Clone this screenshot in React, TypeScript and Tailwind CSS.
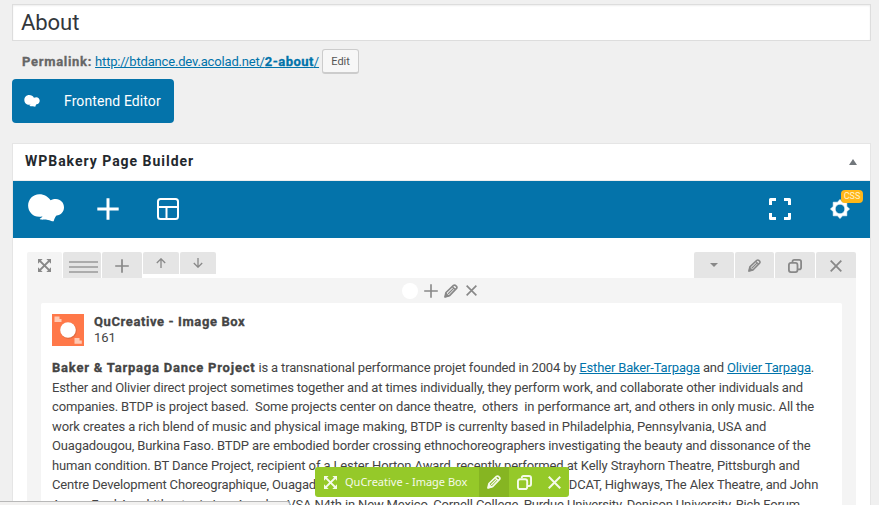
import React from "react";

function Logo({ className }: { className: string }) {
  return (
    <svg viewBox="0 0 36 28" className={className} fill="currentColor">
      <path d="M11.2 .2C5 .2 .1 5.2 .1 11.500S5 22.800 11.200 22.800C12.600 22.800 13.500 22.600 14.500 22.200C14 23.500 12.800 24.200 11.700 24.800C12.200 26.200 17.500 25.600 20 26C22 26.300 24 27.500 25.700 27.300C26.200 25.300 27 22.600 28.500 21.400C32.800 21.200 36 17.800 36 13.300C36 8.600 32.400 5 28 5C25.800 5 24.300 5.500 22.500 6.300C20.500 2.800 16.500 .2 11.200 .2Z" />
    </svg>
  );
}

function Plus({ className, w = 2 }: { className: string; w?: number }) {
  return (
    <svg viewBox="0 0 14 14" className={className} fill="none" stroke="currentColor" strokeWidth={w}>
      <path d="M7 .2V13.800M.2 7H13.800" />
    </svg>
  );
}

function Cross({ className }: { className: string }) {
  return (
    <svg viewBox="0 0 12 12" className={className} fill="none" stroke="currentColor" strokeWidth="1.8">
      <path d="M.7 .7L11.3 11.3M11.3 .7L.7 11.3" />
    </svg>
  );
}

function Pencil({ className }: { className: string }) {
  return (
    <svg viewBox="0 0 14 14" className={className} fill="none" stroke="currentColor" strokeWidth="1.7" strokeLinejoin="round">
      <path d="M2 8.5L9.5 1.4Q10.7.5 12 1.8Q13.5 3.2 12.5 4.4L5.3 11.8L1 13Z" />
      <path d="M8.4 2.7L11.4 5.5M4 10L9.6 4.4" strokeWidth="1.3" />
      <path d="M1 13L2 9L5 12Z" fill="currentColor" strokeWidth=".8" />
    </svg>
  );
}

function Copy({ className }: { className: string }) {
  return (
    <svg viewBox="0 0 14 14" className={className} fill="none" stroke="currentColor" strokeWidth="1.8">
      <rect x=".9" y="3.9" width="8.6" height="9.2" rx="2" />
      <path d="M4.5 3V2.6Q4.5.9 6.2.9H11.2Q13.1.9 13.1 2.8V8.4Q13.1 10.3 11.2 10.3H10" />
    </svg>
  );
}

function Move({ className }: { className: string }) {
  return (
    <svg viewBox="0 0 14 14" className={className} fill="currentColor">
      <path d="M0 0H5L0 5ZM14 0V5L9 0ZM0 14V9L5 14ZM14 14H9L14 9Z" />
      <path d="M2 2L12 12M12 2L2 12" stroke="currentColor" strokeWidth="2.2" />
    </svg>
  );
}

function Arrow({ down = false }: { down?: boolean }) {
  return (
    <svg viewBox="0 0 10 10" className={"size-[10px] " + (down ? "rotate-180" : "")} fill="none" stroke="currentColor" strokeWidth="1.3">
      <path d="M5 10V.8M.8 5L5 .8L9.2 5" />
    </svg>
  );
}

function Line({ children, spacing = "tracking-[-0.14px]" }: { children: React.ReactNode; spacing?: string }) {
  return (
    <div className="h-[19.5px] whitespace-pre">
      <span className={spacing}>{children}</span>
    </div>
  );
}

const link = "text-[#0073aa] underline";
const heavy = "[-webkit-text-stroke:0.3px_currentColor]";
const control = "flex items-center justify-center rounded-t-[2px] bg-[#e5e5e5]";

export default function App() {
  return (
    <div className="relative h-[505px] w-[879px] overflow-hidden bg-[#f0f0f0] pl-3 pt-1 font-['Roboto',sans-serif] text-[13px] text-[#444]">
      <div className="flex h-[37px] w-[859px] items-center border border-[#ddd] bg-white pl-[8px] text-[22.1px] text-[#32373c] shadow-[inset_0_1px_2px_rgba(0,0,0,0.07)]">
        <span className="tracking-[-0.1px]">About</span>
      </div>
      <div className="flex h-[38px] items-center pl-[10px] pt-[3px] text-[#666]">
        <b className={heavy + " mr-[3px] tracking-[0.7px]"}>Permalink:</b>
        <span className={link + " tracking-[-0.17px]"}>http://btdance.dev.acolad.net/<b className={heavy + " tracking-[0.45px]"}>2-about</b>/</span>
        <span className="ml-[3px] flex h-[25px] w-[37px] items-center justify-center rounded-[3px] border border-b-2 border-[#ccc] bg-[#f7f7f7] pt-[2px] text-[11px] text-[#555]">Edit</span>
      </div>
      <div className="flex h-[44px] w-[162px] items-center rounded-[4px] bg-[#0473aa] pl-3 text-[14px] text-white">
        <Logo className="h-[12px] w-[16px]" />
        <span className="ml-[24px] tracking-[0.1px]">Frontend Editor</span>
      </div>

      <div className="mt-5 h-[400px] w-[859px] border border-[#e5e5e5] bg-white">
        <div className="flex h-[37px] items-center justify-between border-b border-[#eee] pl-3 pr-[13px] text-[14px] text-[#23282d]">
          <b className="-mt-px tracking-[0.98px]">WPBakery Page Builder</b>
          <svg viewBox="0 0 8 6" className="h-[6px] w-[8px] fill-[#72777c]"><path d="M4 0L8 6H0Z" /></svg>
        </div>
        <div className="flex h-[57px] items-center bg-[#0473aa] pb-[2px] text-white">
          <Logo className="-mt-[2px] ml-[15px] h-[28px] w-[36px]" />
          <Plus className="ml-[33px] size-[22px]" w={1.9} />
          <svg viewBox="0 0 22 22" className="ml-[38px] size-[22px]" fill="none" stroke="currentColor" strokeWidth="2">
            <rect x="1" y="1" width="20" height="20" rx="2.5" />
            <path d="M1 9H21M9.500 9V21" />
          </svg>
          <svg viewBox="0 0 22 22" className="ml-[590px] size-[22px]" fill="none" stroke="currentColor" strokeWidth="3" strokeLinejoin="round">
            <path d="M1.500 7V1.500H7M15 1.500H20.500V7M20.500 15V20.500H15M7 20.500H1.500V15" />
          </svg>
          <div className="relative ml-[39px] flex size-[20px]">
            <svg viewBox="0 0 20 20" className="size-[20px]" fill="currentColor">
              <path
                fillRule="evenodd"
                stroke="currentColor"
                strokeWidth=".6"
                strokeLinejoin="round"
                d="M10 .4L12.500 3.200L16.800 3.200L16.800 7.500L19.600 10L16.800 12.500L16.800 16.800L12.500 16.800L10 19.600L7.500 16.800L3.200 16.800L3.200 12.500L.4 10L3.200 7.500L3.200 3.200L7.500 3.200ZM10 5.200A4.800 4.800 0 1 0 10 14.800A4.800 4.800 0 1 0 10 5.200Z"
              />
            </svg>
            <span className="absolute left-[11px] top-[-9px] flex h-[13px] w-[22px] items-center justify-center rounded-[4px] bg-[#ffb718] text-[9px] leading-none text-[#fff2cf]">CSS</span>
          </div>
        </div>

        <div className="mx-[14px] mt-[14px] flex h-[26px] items-start text-[#888]">
          <div className="flex h-[26px] w-[35px] items-center justify-center rounded-t-[2px] bg-[#f4f4f4]"><Move className="size-[13px]" /></div>
          <div className={control + " ml-px h-[26px] w-[38px] pl-[3px] pt-[4px]"}>
            <svg viewBox="0 0 29 12" className="h-[12px] w-[29px]" stroke="#999" strokeWidth="1.7"><path d="M0 1H29M0 6H29M0 11H29" /></svg>
          </div>
          <div className={control + " ml-px h-[26px] w-[40px]"}><Plus className="mt-[2px] size-[14px]" w={1.7} /></div>
          <div className={control + " ml-px h-[22px] w-[36px]"}><Arrow /></div>
          <div className={control + " ml-px h-[22px] w-[36px]"}><Arrow down /></div>
          <div className={control + " ml-auto h-[26px] w-[40px]"}>
            <svg viewBox="0 0 8 4" className="h-[4px] w-[8px]" fill="currentColor"><path d="M0 0H8L4 4Z" /></svg>
          </div>
          <div className={control + " ml-px h-[26px] w-[39px]"}><Pencil className="size-[13px]" /></div>
          <div className={control + " ml-px h-[26px] w-[40px]"}><Copy className="mt-[2px] size-[14px]" /></div>
          <div className={control + " ml-px h-[26px] w-[40px]"}><Cross className="mt-[2px] size-[12px]" /></div>
        </div>
        <div className="mx-[14px] h-[240px] bg-[#f4f4f4] px-[14px]">
          <div className="flex h-[25px] items-center pl-[361px] text-[#888]">
            <span className="size-4 rounded-full bg-white" />
            <Plus className="ml-[6px] size-[14px]" w={1.6} />
            <Pencil className="ml-[6px] size-[14px]" />
            <Cross className="ml-[8px] size-[11px]" />
          </div>
          <div className="h-[215px] rounded-t-[2px] bg-white pl-[11px] pt-[11px]">
            <div className="flex h-[32px]">
              <svg viewBox="0 0 32 32" className="size-8">
                <path fill="#ff7849" d="M0 0H32V32H0Z" />
                <path fill="#ffc9b4" d="M2.500 2.500H7.500V5H9.500V8H2.500ZM22.500 24H27.500V26.500H29.800V29.800H22.500Z" />
                <circle cx="16.600" cy="16.800" r="8.200" fill="#a9522f" opacity=".35" />
                <circle cx="16" cy="16" r="7.800" fill="#fff" />
              </svg>
              <div className="ml-[10px] leading-[16px]">
                <b className={heavy + " block tracking-[0.6px]"}>QuCreative - Image Box</b>
                <span>161</span>
              </div>
            </div>
            <div className="mt-[12px] leading-[19.5px]">
              <Line spacing="tracking-[-0.165px]"><b className={heavy + " tracking-[0.78px]"}>Baker &amp; Tarpaga Dance Project</b> is a transnational performance projet founded in 2004 by <span className={link}>Esther Baker-Tarpaga</span> and <span className={link}>Olivier Tarpaga</span>.</Line>
              <Line spacing="tracking-[-0.15px]">Esther and Olivier direct project sometimes together and at times individually, they perform work, and collaborate other individuals and</Line>
              <Line spacing="tracking-[-0.135px]">companies. BTDP is project based.&nbsp; Some projects center on dance theatre,&nbsp; others&nbsp; in performance art, and others in only music. All the</Line>
              <Line spacing="tracking-[-0.1px]">work creates a rich blend of music and physical image making, BTDP is currenlty based in Philadelphia, Pennsylvania, USA and</Line>
              <Line>Ouagadougou, Burkina Faso. BTDP are embodied border crossing ethnochoreographers investigating the beauty and dissonance of the</Line>
              <Line spacing="tracking-[-0.12px]">human condition. BT Dance Project, recipient of a Lester Horton Award, recently performed at Kelly Strayhorn Theatre, Pittsburgh and</Line>
              <Line spacing="tracking-[-0.15px]">Centre Development Choreographique, Ouagadougou, Burkina Faso, The Kennedy Center, REDCAT, Highways, The Alex Theatre, and John</Line>
              <Line spacing="tracking-[-0.15px]">Anson Ford Amphitheatre in Los Angeles, VSA N4th in New Mexico, Cornell College, Purdue University, Denison University, Rich Forum</Line>
            </div>
          </div>
        </div>
      </div>

      <div className="absolute left-[315px] top-[467px] flex h-[30px] w-[254px] items-center rounded-[3px] bg-[#95c929] text-[#f5faea]">
        <Move className="ml-[9px] size-[13px]" />
        <span className="ml-[8px] w-[134px] whitespace-nowrap font-['Noto_Sans',sans-serif] text-[11px]">QuCreative - Image Box</span>
        <span className="flex h-full w-[30px] items-center justify-center bg-[#86b522]"><Pencil className="size-[14px]" /></span>
        <Copy className="ml-[8px] size-[15px]" />
        <Cross className="ml-[16px] size-[13px]" />
      </div>
      <div className="absolute left-0 top-[501px] h-[4px] w-[290px] rounded-tr-[3px] border-r border-t border-[#b8b8b8] bg-[#f2f1f0]" />
    </div>
  );
}
